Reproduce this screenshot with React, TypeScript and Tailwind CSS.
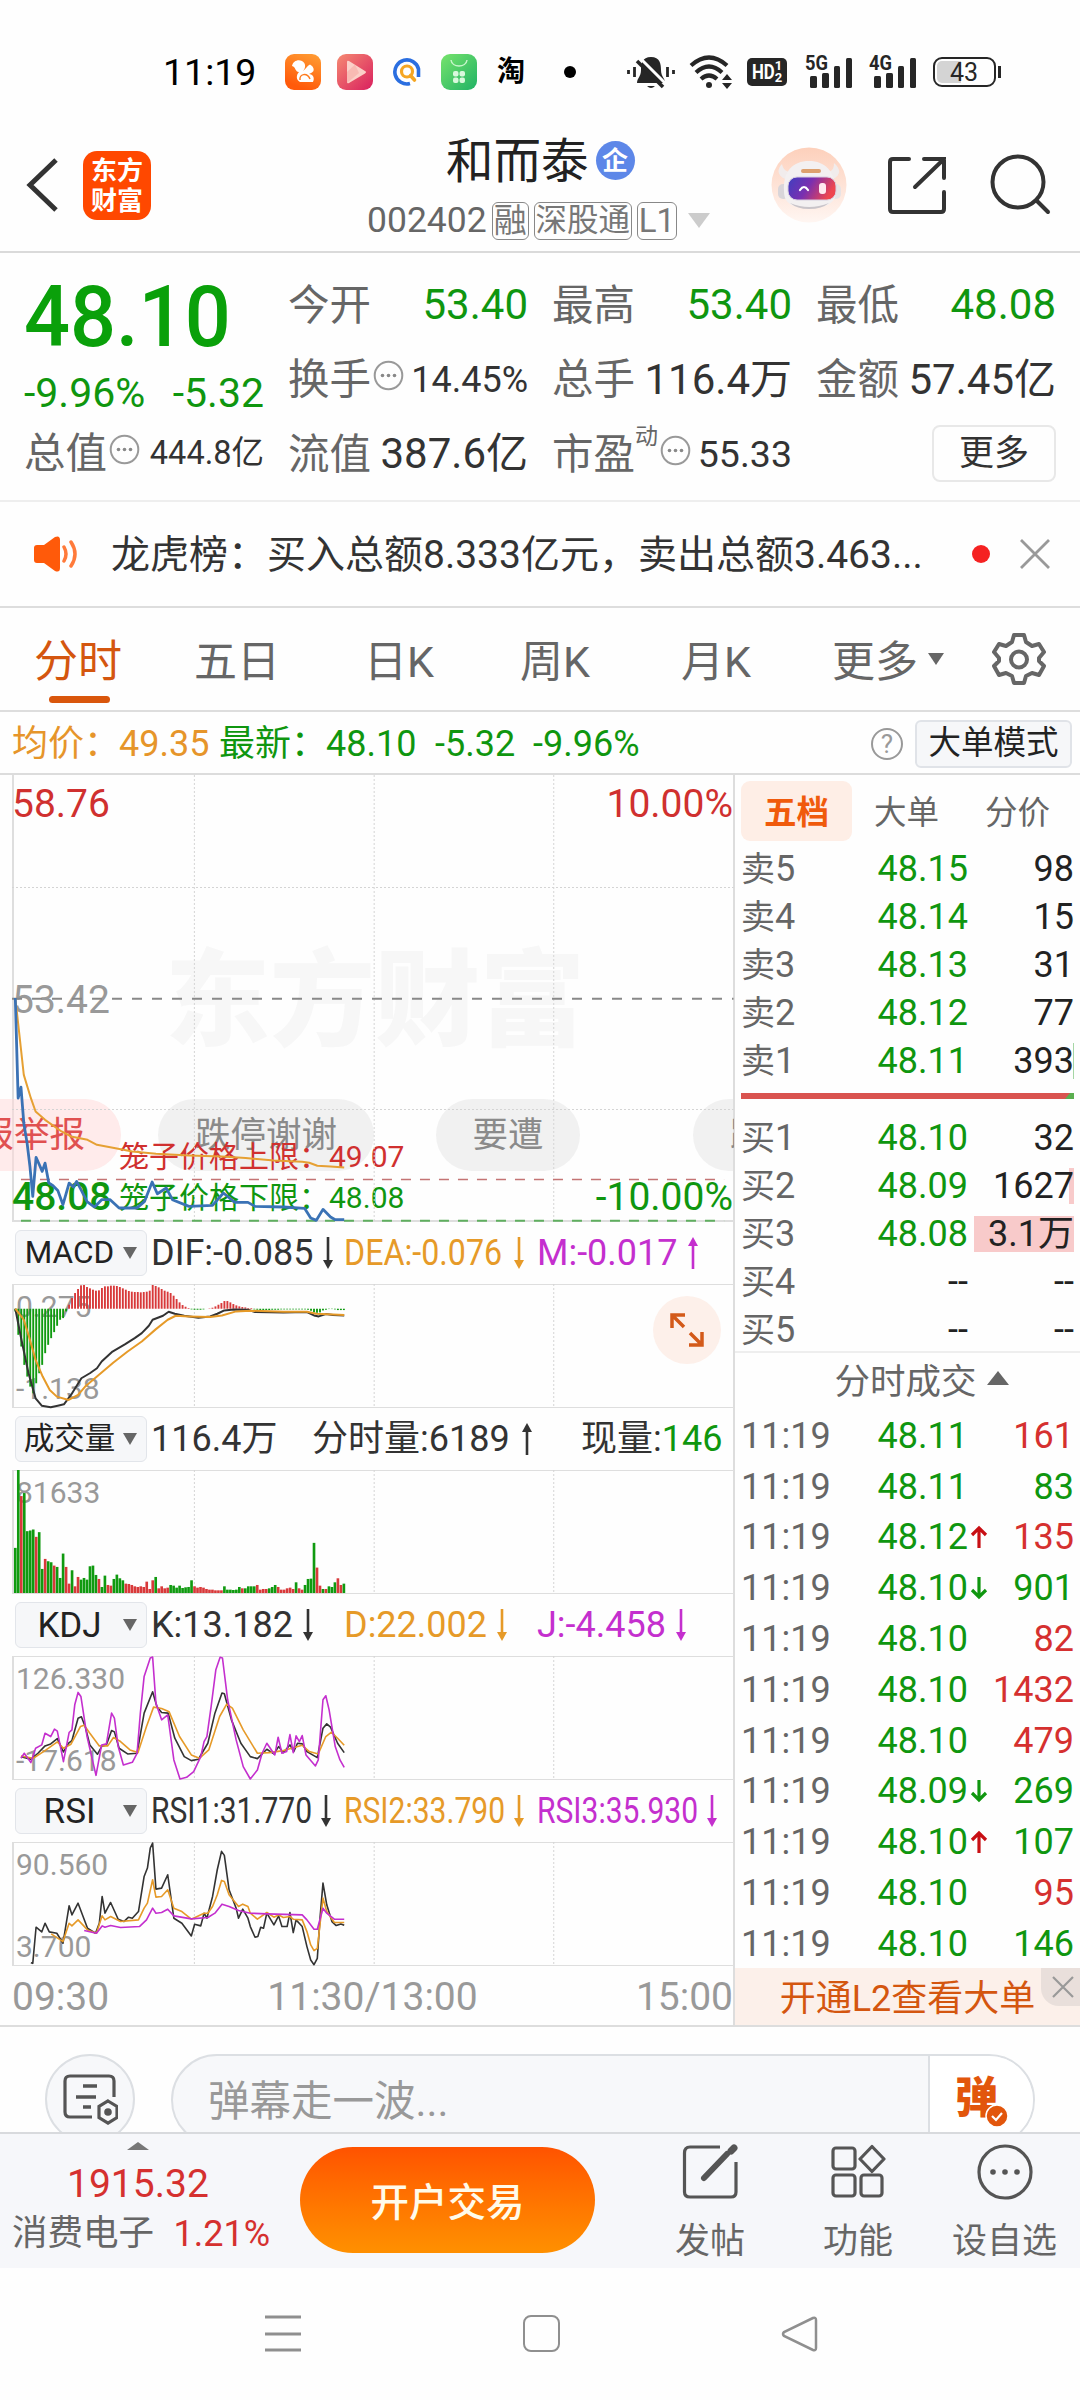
import type { ReactNode } from 'react';

const GREEN = '#0f960f';
const RED = '#d5302f';
const ORANGE = '#e69a28';
const PURPLE = '#c42fce';
const DARK = '#333333';

const asks = [
  { name: '卖5', price: '48.15', vol: '98' },
  { name: '卖4', price: '48.14', vol: '15' },
  { name: '卖3', price: '48.13', vol: '31' },
  { name: '卖2', price: '48.12', vol: '77' },
  { name: '卖1', price: '48.11', vol: '393', bar: 1 },
];

const bids = [
  { name: '买1', price: '48.10', vol: '32' },
  { name: '买2', price: '48.09', vol: '1627', bar: 5 },
  { name: '买3', price: '48.08', vol: '3.1万', bar: 100 },
  { name: '买4', price: '--', vol: '--' },
  { name: '买5', price: '--', vol: '--' },
];

const trades = [
  { price: '48.11', vol: '161', up: true },
  { price: '48.11', vol: '83', up: false },
  { price: '48.12', vol: '135', up: true, dir: 'up' },
  { price: '48.10', vol: '901', up: false, dir: 'down' },
  { price: '48.10', vol: '82', up: true },
  { price: '48.10', vol: '1432', up: true },
  { price: '48.10', vol: '479', up: true },
  { price: '48.09', vol: '269', up: false, dir: 'down' },
  { price: '48.10', vol: '107', up: false, dir: 'up' },
  { price: '48.10', vol: '95', up: true },
  { price: '48.10', vol: '146', up: false },
];

// Series, in plot units (1530 wide)
const priceLine = '32,684 38,985 44,952 50,1060 57,1120 63,1190 69,1280 76,1163 83,1185 89,1205 95,1180 103,1240 112,1248 122,1262 133,1305 146,1240 155,1252 162,1235 172,1262 184,1296 200,1312 215,1290 233,1290 252,1315 290,1315 306,1295 322,1237 333,1272 352,1255 365,1290 400,1310 450,1307 473,1270 497,1298 525,1298 540,1310 600,1312 645,1316 658,1345 670,1352 684,1319 700,1342 710,1350 729,1350';
const avgLine = '32,684 38,760 50,915 65,985 75,1025 95,1050 130,1085 150,1100 185,1110 205,1125 250,1137 280,1145 330,1152 400,1157 470,1160 520,1165 580,1172 640,1176 655,1179 672,1188 700,1190 729,1193';
const difLine = '32,297 45,390 60,490 75,565 88,587 107,592 122,587 135,583 150,555 172,505 190,490 205,475 215,455 238,425 265,403 285,385 300,370 315,348 323,330 345,318 357,306 370,312 390,318 420,324 445,320 460,312 475,302 495,299 525,300 540,307 600,308 650,307 665,317 675,320 690,313 705,316 729,317';
const deaLine = '32,297 50,330 62,385 75,450 90,500 105,540 120,560 145,570 165,555 180,530 205,500 240,458 270,425 300,395 330,358 355,330 372,318 400,320 445,322 470,317 500,305 530,303 600,306 650,306 670,312 729,316';
const kLine = '44,500 65,508 80,490 95,468 107,462 121,446 134,486 145,460 152,452 165,385 172,381 180,410 190,465 206,493 215,470 225,465 236,422 242,426 252,475 270,492 290,490 305,370 323,306 332,350 342,368 356,370 370,445 390,500 405,512 420,508 440,460 455,370 470,310 475,312 490,390 510,460 530,500 545,506 565,478 580,492 590,470 600,488 614,465 622,485 630,460 640,462 650,485 672,503 684,415 692,402 700,412 715,460 729,488';
const dLine = '44,498 70,505 95,482 121,456 134,475 150,463 170,410 178,406 190,430 210,468 228,468 240,443 255,455 275,480 292,488 310,410 325,352 342,356 358,366 380,440 405,495 422,505 442,480 465,380 480,343 492,355 515,420 545,490 570,488 600,482 625,472 640,466 655,485 674,492 690,440 702,427 715,445 729,466';
const jLine = '44,505 51,490 65,518 75,475 88,465 95,430 107,440 115,418 121,424 134,515 146,428 152,420 158,345 165,308 171,320 184,440 203,556 215,465 225,462 236,370 242,385 250,470 261,525 280,517 290,490 297,370 305,260 318,205 323,202 330,340 342,390 355,375 368,510 381,567 395,562 410,545 425,500 432,455 438,440 447,350 457,240 466,203 471,205 482,330 500,450 515,530 530,567 545,540 555,490 565,460 582,495 589,442 597,490 607,485 614,434 621,488 627,438 634,455 640,437 648,495 668,528 674,510 684,330 690,318 697,360 710,470 720,510 729,532';
const rsi1 = '65,1118 69,1120 76,1012 88,1026 95,1000 104,1026 120,1030 133,1060 146,948 152,975 165,940 185,1015 202,1030 210,1000 216,920 222,970 234,938 250,988 262,995 272,982 280,985 293,965 305,860 312,835 318,775 323,760 330,898 342,895 355,855 368,985 385,1000 405,1038 412,1003 425,1008 432,970 438,985 450,920 460,840 469,785 475,797 485,900 500,955 505,985 514,958 525,985 530,1010 540,1042 546,1040 552,1012 558,1015 565,970 580,1005 590,978 597,1010 608,1010 614,968 621,1028 627,990 640,1010 650,1070 658,1110 665,1124 672,1105 678,980 684,880 692,945 703,995 712,1007 722,1002 729,1006';
const rsi2 = '108,1032 133,1055 146,1000 152,1008 165,990 185,1020 204,1030 216,978 222,990 234,980 255,995 293,990 305,955 312,940 323,870 330,922 342,920 355,900 368,955 385,965 405,988 432,970 440,970 450,950 460,915 469,872 475,875 485,915 505,950 514,943 525,950 530,970 545,988 565,968 580,982 590,975 600,983 614,980 621,988 640,990 650,1025 658,1065 665,1082 672,1075 678,1000 684,925 692,965 708,998 729,998';
const rsi3 = '178,1022 204,1030 216,1008 222,1012 234,1007 255,1013 295,1010 310,990 323,955 330,970 342,968 355,958 368,978 405,987 440,983 455,970 470,943 485,950 505,962 530,970 565,972 640,975 650,990 665,1018 672,1018 684,955 692,970 708,988 729,988';

// positive = red, negative = green
const macdBars = [
  -8, -78, -113, -168, -203, -233, -253, -223, -193, -168, -133, -108, -88, -70, -51, -33, -28, -8,
  12, 32, 47, 59, 70, 71, 65, 61, 57, 54, 55, 62, 67, 67, 69, 69, 68, 65, 61, 57, 53, 51, 50, 50, 49, 50, 51, 54,
  71, 68, 64, 59, 54, 51, 47, 39, 29, 19, 11, 6, 2, -2, -3, -3, -3, -2, 0, 1, 3, 7, 12, 17, 23, 23, 19, 14, 10, 7, 5, 4, 2, 2,
  -2, -3, -4, -4, -4, -4, -3, -3, -3, -2, -2, -2, -2, -2, -2, -2, -2, -2, -3, -6, -11, -12, -11, -5, -3, -1, -1, -2, -4, -4, -4,
];
const volBars = [
  -135, -368, 290, -299, -185, -187, -190, 168, -182, -72, 102, -95, -92, 82, -78, -45, -118, 78, 28, -68, 20, 48, -40, -45, -40, -80, -82, -54, 42, -18,
  -52, 24, 22, -42, -55, -44, -38, 28, 27, 24, 20, 18, 20, 18, 34, 12, 38, -48, 14, 20, 14, 16, -24, -22, -16, -22, -15, -17, -18, -38,
  20, 16, 18, 16, 12, 10, 10, 8, 8, 8, -20, -10, -10, -9, -10, -18, 14, -14, -20, -20, -20, 24, 10, 12, 12, -14, -18, -24, 18, 10,
  10, 14, 16, 12, -32, 14, 10, -24, -42, -43, -150, 76, 22, -12, 12, -20, -18, -32, 44, 24, -28,
];

function Line({ points, color, width = 1.6 }: { points: string; color: string; width?: number }) {
  return <polyline points={points} fill="none" stroke={color} strokeWidth={width} strokeLinejoin="round" vectorEffect="non-scaling-stroke" />;
}

function Bars({ data, base, width, signed }: { data: number[]; base: number; width: number; signed?: boolean }) {
  return (
    <>
      {data.map((v, i) => (
        <rect key={i} x={32 + i * 6.33 - width / 2} width={width} y={signed && v < 0 ? base : base - Math.abs(v)} height={Math.abs(v)} fill={v > 0 ? '#d8393a' : '#109a10'} />
      ))}
    </>
  );
}

function Grid({ top, bottom }: { top: number; bottom: number }) {
  return (
    <g stroke="#d4d4d4" strokeDasharray="2 2">
      {[411.5, 792.5, 1173].map((x) => (
        <line key={x} x1={x} x2={x} y1={top} y2={bottom} vectorEffect="non-scaling-stroke" />
      ))}
    </g>
  );
}

function Panel({ top, children, labels }: { top: number; children: ReactNode; labels: ReactNode }) {
  return (
    <div className="relative ml-3 h-[124px] w-[722px] border-y-[1.5px] border-l-2 border-[#dedede] text-[30px] leading-none text-[#999]">
      {labels}
      <svg className="absolute -left-[2px] -top-px h-[123px] w-[722px] overflow-visible" viewBox={`25 ${top} 1530 368`} preserveAspectRatio="none">
        <Grid top={top} bottom={top + 368} />
        {children}
      </svg>
    </div>
  );
}

function ThinArrow({ up }: { up?: boolean }) {
  return (
    <svg className={up ? 'h-8 w-2.5 shrink-0' : 'h-8 w-2.5 shrink-0 rotate-180'} viewBox="0 0 10 32">
      <path d="M5 6V32" stroke="currentColor" strokeWidth="2.6" />
      <path d="M0 9L5 0L10 9Z" fill="currentColor" />
    </svg>
  );
}

function IndicatorRow({ name, size = 'text-[31.5px]', children }: { name: string; size?: string; children: ReactNode }) {
  return (
    <div className="flex h-[62px] items-center pl-[15px] text-[36px] leading-none">
      <div className={`flex h-[46px] w-[132px] shrink-0 items-center justify-between rounded-md border border-[#e2e5ea] bg-[#f6f7f9] pr-[9px] text-[#222] ${size}`}>
        <span className="flex-1 text-center text-nowrap">{name}</span>
        <span className="h-0 w-0 border-x-[7px] border-t-[12px] border-x-transparent border-t-[#666]" />
      </div>
      <div className="flex flex-1 items-center pl-1">{children}</div>
    </div>
  );
}

function Value({ text, color, up, squeeze }: { text: string; color: string; up?: boolean; squeeze?: boolean }) {
  return (
    <div className="flex w-[193px] shrink-0 items-center gap-2.5 whitespace-nowrap" style={{ color }}>
      {squeeze ? (
        <span className="w-[160px]">
          <span className={text.startsWith('DEA') ? 'inline-block origin-left scale-x-[0.895]' : 'inline-block origin-left scale-x-[0.835]'}>{text}</span>
        </span>
      ) : (
        <span>{text}</span>
      )}
      <ThinArrow up={up} />
    </div>
  );
}

function Dots() {
  return (
    <svg className="h-[31px] w-[31px] shrink-0" viewBox="0 0 31 31">
      <circle cx="15.5" cy="15.5" r="13.8" fill="none" stroke="#999" strokeWidth="2" />
      <g fill="#888"><circle cx="9.5" cy="15.5" r="1.8" /><circle cx="15.5" cy="15.5" r="1.8" /><circle cx="21.5" cy="15.5" r="1.8" /></g>
    </svg>
  );
}

function Stat({ label, value, size = 'text-[42px]', green, info, sup }: { label: string; value: string; size?: string; green?: boolean; info?: boolean; sup?: string }) {
  return (
    <div className="flex h-[74.5px] items-center whitespace-nowrap">
      <span className="text-[41.5px] text-[#666]">{label}</span>
      {sup && <span className="mb-9 text-[23px] text-[#666]">{sup}</span>}
      {info && <span className="mb-2 ml-0.5"><Dots /></span>}
      <span className={`ml-auto ${size} ${green ? 'text-[#0f960f]' : 'text-[#333]'}`}>{value}</span>
    </div>
  );
}

function Signal({ label }: { label: string }) {
  return (
    <svg className="h-8 w-[47px] overflow-visible" viewBox="0 0 47 32">
      <text x="-1" y="14" fontSize="21" fontWeight="700" fill="#262626" textLength="23" lengthAdjust="spacingAndGlyphs">{label}</text>
      <g fill="#262626">
        <rect x="4" y="20" width="7" height="12" rx="1.5" />
        <rect x="16" y="17" width="7" height="15" rx="1.5" />
        <rect x="28" y="10" width="6" height="22" rx="1.5" />
        <rect x="40" y="2" width="6" height="30" rx="1.5" />
      </g>
    </svg>
  );
}

function StatusBar() {
  return (
    <div className="flex h-[110px] items-center pt-[34px] leading-none text-black">
      <span className="ml-[163px] w-[122px] pt-px text-[37.5px]">11:19</span>
      <svg className="h-9 w-9" viewBox="0 0 36 36">
        <defs><linearGradient id="uc" x1="1" y1="0" x2="0.6" y2="1"><stop stopColor="#ff9f35" /><stop offset="1" stopColor="#ff5a0a" /></linearGradient></defs>
        <rect width="36" height="36" rx="9" fill="url(#uc)" />
        <path d="M7 12C8 7 13 5 17 7C21 9 21 14 18 17C21 15 22 12 25 10.500L27 12C29 14 29.500 17 27 18.500L24 20C28 20 30 24 28 28H15C11 26 11 21 14 18C10 18 11 13 7 12Z" fill="#fff" />
        <path d="M15 26C14 20 22 18 25 25" fill="none" stroke="#ff7a1c" strokeWidth="1.5" />
      </svg>
      <svg className="ml-4 h-9 w-9" viewBox="0 0 36 36">
        <defs><linearGradient id="vid" x1="0" y1="0" x2="1" y2="1"><stop stopColor="#f58a72" /><stop offset="1" stopColor="#d91f5e" /></linearGradient></defs>
        <rect width="36" height="36" rx="9" fill="url(#vid)" />
        <path d="M10 8Q10 6 12 7L28 17Q30 18 28 19.500L12 29Q10 30 10 28Z" fill="#fbd0c8" />
        <path d="M10 18L18 10.500L22 19L10 29Z" fill="#f7b1aa" opacity="0.7" />
      </svg>
      <svg className="ml-[20px] h-7 w-7" viewBox="0 0 28 28">
        <path d="M17 25.500A12 12 0 1 1 25.500 11V19" fill="none" stroke="#2a6ee0" strokeWidth="3.600" />
        <circle cx="14" cy="13.500" r="5.500" fill="none" stroke="#f5a623" strokeWidth="3.200" />
        <path d="M17.500 17.500L21.500 22" stroke="#f5a623" strokeWidth="3.600" strokeLinecap="round" />
      </svg>
      <svg className="ml-[20px] h-9 w-9" viewBox="0 0 36 36">
        <defs><linearGradient id="shop" x1="0" y1="0" x2="1" y2="1"><stop stopColor="#77e36c" /><stop offset="1" stopColor="#20b265" /></linearGradient></defs>
        <rect width="36" height="36" rx="9" fill="url(#shop)" />
        <path d="M10 6C11 14 25 14 26 6" fill="none" stroke="#c9f6cc" strokeWidth="1.500" />
        <g fill="#d9f8dc"><rect x="12" y="17" width="5.500" height="5.500" rx="2" /><rect x="18.500" y="17" width="5.500" height="5.500" rx="2" /><rect x="12" y="23.500" width="5.500" height="5.500" rx="2" /><rect x="18.500" y="23.500" width="5.500" height="5.500" rx="2" /></g>
      </svg>
      <span className="ml-5 text-[28px] font-bold">淘</span>
      <span className="ml-[39px] h-3 w-3 rounded-full bg-black" />
      <svg className="ml-[50px] h-9 w-[50px]" viewBox="0 0 50 36">
        <path d="M25 3C34 3 35 10 35 16C35 23 39 24 39 29H11C11 24 15 23 15 16C15 10 16 3 25 3Z" fill="#262626" />
        <path d="M21 32H29Q25 36 21 32Z" fill="#262626" />
        <path d="M14 4L41 31" stroke="#fff" strokeWidth="3" />
        <path d="M11 7L37 33" stroke="#262626" strokeWidth="3.600" />
        <path d="M2.500 16V20M8.500 13V23M41.500 13V23M47.500 16V20" stroke="#262626" strokeWidth="2.800" />
      </svg>
      <svg className="ml-[13px] h-9 w-11" viewBox="0 0 44 36">
        <g fill="none" stroke="#262626" strokeWidth="4.200">
          <path d="M2 11.500Q20 -4.500 38 11.500" />
          <path d="M7 18.500Q20 6.500 33 18.500" />
          <path d="M12 25Q20 18 28 25" />
        </g>
        <circle cx="20" cy="31" r="3" fill="#262626" />
        <path d="M33 26L38 20L43 26ZM33 29L38 35L43 29Z" fill="#262626" />
      </svg>
      <div className="ml-[14px] flex h-[28px] w-10 items-center justify-center rounded-[5px] bg-[#262626] text-white">
        <span className="inline-block w-[23px] text-[21px] font-bold"><span className="inline-block origin-left scale-x-[0.8]">HD</span></span>
        <span className="flex flex-col text-[13px] font-bold leading-[12px]"><span>1</span><span>2</span></span>
      </div>
      <span className="ml-[19px]"><Signal label="5G" /></span>
      <span className="ml-[17px]"><Signal label="4G" /></span>
      <div className="ml-[16px] flex items-center gap-0.5">
        <div className="flex h-[30px] w-[63px] items-center rounded-[9px] border-[2.5px] border-[#262626] p-[2px]">
          <div className="flex h-full w-[24px] items-center rounded-l-[5px] bg-[#d4d4d4] pl-[13px] text-[25px] text-[#262626]">43</div>
        </div>
        <div className="h-3 w-[2.5px] bg-[#262626]" />
      </div>
    </div>
  );
}

function Header() {
  return (
    <div className="flex h-[143px] items-start border-b-2 border-[#dadada] leading-none">
      <svg className="ml-[25px] mt-[46px] h-[58px] w-9" viewBox="0 0 36 58">
        <path d="M31 4L5 29L31 54" fill="none" stroke="#333" strokeWidth="5" />
      </svg>
      <div className="ml-[22px] mt-[41px] flex h-[69px] w-[68px] flex-col items-center justify-center rounded-[14px] bg-[#ff4800] text-[26px] font-bold leading-[30px] text-white">
        <span>东方</span>
        <span>财富</span>
      </div>
      <div className="ml-[216px] mt-[29px] flex w-[343px] flex-col">
        <div className="flex items-center pl-[79px]">
          <span className="text-[47.5px] text-[#222]">和而泰</span>
          <span className="mb-1 ml-[7px] flex h-[39px] w-[39px] items-center justify-center rounded-full bg-[#5d87e8] text-[26px] font-bold text-white">企</span>
        </div>
        <div className="mt-[15px] flex items-center gap-[5px] text-[33px] text-[#777]">
          <span className="text-[35.5px] text-[#666]">002402</span>
          <span className="flex h-[38px] items-center rounded-md border-[1.5px] border-[#888] px-px text-nowrap">融</span>
          <span className="flex h-[38px] w-[98px] items-center justify-center rounded-md border-[1.5px] border-[#888] text-nowrap text-[31.5px]">深股通</span>
          <span className="flex h-[38px] items-center rounded-md border-[1.5px] border-[#888] px-px">L1</span>
          <span className="ml-1.5 h-0 w-0 border-x-[11px] border-t-[15px] border-x-transparent border-t-[#ccc]" />
        </div>
      </div>
      <svg className="ml-[61px] mt-[37px] h-[76px] w-[76px]" viewBox="0 0 76 76">
        <defs>
          <linearGradient id="peach" x1="0" y1="0" x2="0" y2="1"><stop stopColor="#fdd0bb" /><stop offset="1" stopColor="#fff6f2" /></linearGradient>
          <linearGradient id="visor" x1="0" y1="0" x2="1" y2="0.3"><stop stopColor="#3f3fc0" /><stop offset="0.5" stopColor="#7a2fb0" /><stop offset="1" stopColor="#ee4550" /></linearGradient>
        </defs>
        <circle cx="38" cy="38" r="37.500" fill="url(#peach)" />
        <path d="M14 32C6 28 6 22 11 17C12 23 16 25 22 26ZM62 32C70 28 70 22 63 16C63 23 60 25 54 26Z" fill="#f1ecec" />
        <rect x="7" y="37" width="11" height="15" rx="5" fill="#d9d5d9" />
        <rect x="59" y="37" width="11" height="15" rx="5" fill="#e7e3e5" />
        <path d="M13 44C12 24 22 14 38 14C54 14 64 24 65 44C65 57 54 61 39 61C22 61 13 57 13 44Z" fill="#f3f0f1" />
        <path d="M19 56Q38 64 58 56Q51 62 38 62Q26 62 19 56Z" fill="#c9c4c9" />
        <rect x="17" y="30" width="48" height="23" rx="9" fill="url(#visor)" stroke="#d8cfe0" strokeWidth="1" />
        <path d="M29 43Q33 37 37 43" fill="none" stroke="#fff" strokeWidth="2.200" strokeLinecap="round" />
        <rect x="48" y="36" width="7" height="11" rx="3" fill="#ffe9f0" />
        <rect x="30" y="22" width="20" height="4" rx="2" fill="#dda06e" />
      </svg>
      <svg className="ml-[40px] mt-[45px] h-[60px] w-[60px]" viewBox="0 0 60 60" fill="none" stroke="#333" strokeWidth="4" strokeLinecap="round">
        <path d="M22 4H6Q3 4 3 7V54Q3 57 6 57H54Q57 57 57 54V37" />
        <path d="M37 4H57V23M57 4L28 32" />
      </svg>
      <svg className="ml-[43px] mt-[44px] h-[62px] w-[62px]" viewBox="0 0 62 62" fill="none" stroke="#333" strokeWidth="4">
        <circle cx="28" cy="28" r="25.500" />
        <path d="M47 47L58 58" strokeLinecap="round" />
      </svg>
    </div>
  );
}

function Quote() {
  return (
    <div className="flex h-[249px] border-b-2 border-[#eee] pt-[15px] leading-none">
      <div className="ml-[24px] w-[240px]">
        <div className="flex h-[98px] items-center text-[#0aa00a]">
          <span className="origin-left scale-x-[0.942] text-[86px] font-medium">48.10</span>
        </div>
        <div className="mt-[4px] flex h-[46px] items-center justify-between text-[41px] text-[#0f960f]">
          <span>-9.96%</span>
          <span>-5.32</span>
        </div>
        <Stat label="总值" value="444.8亿" size="text-[32.5px]" info />
      </div>
      <div className="ml-[24px] w-[240px]">
        <Stat label="今开" value="53.40" green />
        <Stat label="换手" value="14.45%" size="text-[36px]" info />
        <Stat label="流值" value="387.6亿" />
      </div>
      <div className="ml-[24px] w-[240px]">
        <Stat label="最高" value="53.40" green />
        <Stat label="总手" value="116.4万" />
        <Stat label="市盈" value="55.33" size="text-[37.5px]" sup="动" info />
      </div>
      <div className="ml-[24px] w-[240px]">
        <Stat label="最低" value="48.08" green />
        <Stat label="金额" value="57.45亿" />
        <div className="flex h-[72px] items-center justify-end">
          <span className="flex h-[57px] w-[124px] items-center justify-center rounded-lg border-2 border-[#e8e8e8] text-[35px] text-[#333]">更多</span>
        </div>
      </div>
    </div>
  );
}

function Notice() {
  return (
    <div className="flex h-[106px] items-center border-b-2 border-[#ddd] leading-none">
      <svg className="ml-[33px] h-9 w-[46px]" viewBox="0 0 46 36">
        <path d="M1 12Q1 9 4 9H11L22 1Q27 -1 27 4V32Q27 37 22 35L11 27H4Q1 27 1 24Z" fill="#ff5a0a" />
        <path d="M31 11Q35 18 31 25M38 6Q46 18 38 30" fill="none" stroke="#ff7a3a" strokeWidth="3.500" strokeLinecap="round" />
      </svg>
      <span className="mt-0.5 ml-[32px] w-[841px] whitespace-nowrap text-[39px] text-[#333]">龙虎榜：买入总额8.333亿元，卖出总额3.463...</span>
      <span className="ml-[20px] h-[18px] w-[18px] rounded-full bg-[#f52222]" />
      <svg className="ml-[29px] h-8 w-8" viewBox="0 0 32 32">
        <path d="M2 2L30 30M30 2L2 30" stroke="#999" strokeWidth="2.800" />
      </svg>
    </div>
  );
}

function Tabs() {
  return (
    <div className="flex h-[104px] items-center border-b-2 border-[#ddd] text-[43px] leading-none text-[#666]">
      <div className="relative ml-[34px] w-[160px] pt-1.5 text-[44px] text-[#d4560f]">
        分时
        <span className="absolute -bottom-[19px] left-[15px] h-[7px] w-[61px] rounded bg-[#d9560c]" />
      </div>
      <span className="w-[170px] pt-1.5">五日</span>
      <span className="w-[156px] pt-1.5">日K</span>
      <span className="w-[161px] pt-1.5">周K</span>
      <span className="w-[151px] pt-1.5">月K</span>
      <span className="pt-1.5">更多</span>
      <span className="ml-[10px] h-0 w-0 border-x-[8px] border-t-[12px] border-x-transparent border-t-[#666]" />
      <svg className="ml-[48px] h-[54px] w-[54px]" viewBox="0 0 54 54" fill="none" stroke="#666" strokeWidth="4" strokeLinejoin="round">
        <path d="M22 3H32L34 10L40 14L47 12L52 20L47 26V29L52 34L47 43L40 41L34 44L32 51H22L20 44L14 41L7 43L2 34L7 29V26L2 20L7 12L14 14L20 10Z" />
        <circle cx="27" cy="27.500" r="8" />
      </svg>
    </div>
  );
}

function InfoBar() {
  return (
    <div className="flex h-[63px] items-center border-b-2 border-[#dcdcdc] pt-0.5 text-[36px] leading-none whitespace-nowrap text-[#0f960f]">
      <span className="ml-[12px] w-[107px] text-[#e6952a]">均价：</span>
      <span className="w-[100px] text-[#e6952a]">49.35</span>
      <span className="w-[107px]">最新：</span>
      <span className="w-[109px]">48.10</span>
      <span className="w-[98px]">-5.32</span>
      <span>-9.96%</span>
      <span className="ml-auto flex h-8 w-8 items-center justify-center rounded-full border-2 border-[#999] text-[26px] text-[#999]">?</span>
      <span className="mr-2 ml-[12px] flex h-[48px] w-[157px] items-center justify-center rounded-md border-2 border-[#e0e3e8] bg-[#f6f7f9] text-[32.500px] text-[#222]">大单模式</span>
    </div>
  );
}

function PriceChart() {
  return (
    <div className="relative ml-3 h-[447px] w-[722px] border-b-2 border-l-2 border-[#dedede] text-[39px] leading-none whitespace-nowrap">
      <span className="absolute top-[174px] left-[151px] text-[105px] font-black text-[#f7f7f7]">东方财富</span>
      <span className="absolute top-[10px] -left-[2px] text-[#d0302f]">58.76</span>
      <span className="absolute top-[10px] right-px text-[#d0302f]">10.00%</span>
      <span className="absolute top-[206px] -left-[2px] text-[#999]">53.42</span>
      <span className="absolute top-[403px] -left-[2px] font-medium text-[#0f960f]">48.08</span>
      <span className="absolute top-[403px] right-px text-[#0f960f]">-10.00%</span>
      <div className="absolute top-[324px] -left-[14px] h-[74px] w-[734px] overflow-hidden text-[35.500px]">
        <span className="absolute top-0 -left-[60px] flex h-[72px] w-[181px] items-center justify-end rounded-full bg-[#ffd8d8]/50 pt-0.5 pr-[36px] text-[#e05050]">报举报</span>
        <span className="absolute top-0 left-[158px] flex h-[72px] w-[216px] items-center justify-center rounded-full bg-[#dedede]/40 pt-0.5 text-[#8a8a8a]">跌停谢谢</span>
        <span className="absolute top-0 left-[436px] flex h-[72px] w-[144px] items-center justify-center rounded-full bg-[#dedede]/40 pt-0.5 text-[#8a8a8a]">要遭</span>
        <span className="absolute top-0 left-[693px] flex h-[72px] w-[144px] items-center rounded-full bg-[#dedede]/40 pt-0.5 pl-[37px] text-[#8a8a8a]">跌</span>
      </div>
      <span className="absolute top-[367px] left-[105px] text-[30px] text-[#d0302f]">笼子价格上限：49.07</span>
      <span className="absolute top-[408px] left-[105px] text-[30px] text-[#0f960f]">笼子价格下限：48.08</span>
      <svg className="absolute top-0 -left-[2px] h-[446px] w-[722px] overflow-visible" viewBox="25 14 1530 1340" preserveAspectRatio="none">
        <Grid top={14} bottom={1353} />
        <g stroke="#d4d4d4" strokeDasharray="2 2">
          <line x1="25" x2="1554" y1="352" y2="352" vectorEffect="non-scaling-stroke" />
          <line x1="25" x2="1554" y1="1019" y2="1019" vectorEffect="non-scaling-stroke" />
        </g>
        <line x1="25" x2="1554" y1="686" y2="686" stroke="#888" strokeWidth="2" strokeDasharray="10 10" vectorEffect="non-scaling-stroke" />
        <line x1="44" x2="1534" y1="1229" y2="1229" stroke="#c47474" strokeWidth="1.500" strokeDasharray="10 9" vectorEffect="non-scaling-stroke" />
        <line x1="44" x2="1534" y1="1353" y2="1353" stroke="#5fae5f" strokeWidth="2" strokeDasharray="10 9" vectorEffect="non-scaling-stroke" />
        <Line points={avgLine} color="#e6a033" width={2} />
        <Line points={priceLine} color="#3a72b5" width={2.8} />
      </svg>
    </div>
  );
}

function Charts() {
  return (
    <div className="w-[735px] shrink-0 border-r-2 border-[#ddd]">
      <PriceChart />
      <IndicatorRow name="MACD">
        <Value text="DIF:-0.085" color={DARK} />
        <Value text="DEA:-0.076" color={ORANGE} squeeze />
        <Value text="M:-0.017" color={PURPLE} up />
      </IndicatorRow>
      <div className="relative">
        <Panel
          top={223}
          labels={<><span className="absolute top-[7px] left-0.5">0.275</span><span className="absolute top-[89px] left-0.5">-1.138</span></>}
        >
          <Bars data={macdBars} base={297} width={4} signed />
          <Line points={difLine} color={DARK} width={2} />
          <Line points={deaLine} color={ORANGE} width={2} />
        </Panel>
        <div className="absolute top-[12px] right-[12px] flex h-[68px] w-[68px] items-center justify-center rounded-full bg-[#fdf0ea]">
          <svg className="h-[34px] w-[34px]" viewBox="0 0 34 34" fill="none" stroke="#d35a1a" strokeWidth="3.500">
            <path d="M2 15V2H15M2 2L14 14M32 19V32H19M32 32L20 20" />
          </svg>
        </div>
      </div>
      <IndicatorRow name="成交量" size="text-[30.5px]">
        <span className="w-[161px] text-nowrap text-[#333]">116.4万</span>
        <div className="flex w-[269px] items-center gap-[12px] text-nowrap text-[#333]"><span>分时量:6189</span><ThinArrow up /></div>
        <span className="text-nowrap text-[#333]">现量:<span className="text-[#0f960f]">146</span></span>
      </IndicatorRow>
      <Panel top={781} labels={<span className="absolute top-[7px] left-0.5">81633</span>}>
        <Bars data={volBars} base={1149} width={5.6} />
      </Panel>
      <IndicatorRow name="KDJ" size="text-[35px]">
        <Value text="K:13.182" color={DARK} />
        <Value text="D:22.002" color={ORANGE} />
        <Value text="J:-4.458" color={PURPLE} />
      </IndicatorRow>
      <Panel
        top={199}
        labels={<><span className="absolute top-[7px] left-0.5">126.330</span><span className="absolute top-[89px] left-0.5">-17.618</span></>}
      >
        <Line points={kLine} color={DARK} />
        <Line points={dLine} color={ORANGE} />
        <Line points={jLine} color={PURPLE} />
      </Panel>
      <IndicatorRow name="RSI" size="text-[35px]">
        <Value text="RSI1:31.770" color={DARK} squeeze />
        <Value text="RSI2:33.790" color={ORANGE} squeeze />
        <Value text="RSI3:35.930" color={PURPLE} squeeze />
      </IndicatorRow>
      <Panel
        top={757}
        labels={<><span className="absolute top-[7px] left-0.5">90.560</span><span className="absolute top-[89px] left-0.5">3.700</span></>}
      >
        <Line points={rsi1} color={DARK} />
        <Line points={rsi2} color={ORANGE} />
        <Line points={rsi3} color={PURPLE} />
      </Panel>
      <div className="flex h-[59px] items-center justify-between pt-1 pl-[12px] text-[39px] leading-none text-[#999]">
        <span>09:30</span>
        <span>11:30/13:00</span>
        <span>15:00</span>
      </div>
    </div>
  );
}

function Level({ name, price, vol, bar = 0, ask }: { name: string; price: string; vol: string; bar?: number; ask?: boolean }) {
  const empty = price === '--';
  return (
    <div className="flex h-12 items-center text-[36px]">
      <span className="w-[101px] text-nowrap text-[#666]"><span className="text-[34px]">{name[0]}</span>{name[1]}</span>
      <span className={empty ? 'w-[126px] text-right text-[#222]' : 'w-[126px] text-right text-[#0f960f]'}>{price}</span>
      <span className="relative flex h-9 flex-1 items-center justify-end text-[#222]">
        <span className={`absolute inset-y-0 right-0 ${ask ? 'bg-[#a5d6a5]' : 'bg-[#f8caca]'}`} style={{ width: bar }} />
        <span className="relative">{vol}</span>
      </span>
    </div>
  );
}

function OrderBook() {
  return (
    <div className="flex flex-1 flex-col leading-none">
      <div className="mt-[6px] ml-1.5 flex h-[60px] shrink-0 items-center text-[32.500px] text-[#666]">
        <span className="flex h-[60px] w-[111px] items-center justify-center rounded-[9px] bg-[#feeee6] pt-1 font-bold text-[#f05a0c]">五档</span>
        <span className="ml-[22px] w-[111px] pt-1">大单</span>
        <span className="pt-1">分价</span>
      </div>
      <div className="mt-1 shrink-0 pr-[6px] pl-[6px]">
        {asks.map((l) => <Level key={l.name} {...l} ask />)}
      </div>
      <div className="mt-[8px] mr-1.5 ml-1.5 flex h-1.5 shrink-0 bg-[#d9534f]">
        <span className="ml-auto h-0 w-0 border-b-[6px] border-l-[5px] border-b-[#5aae4f] border-l-transparent" />
        <span className="w-1 bg-[#5aae4f]" />
      </div>
      <div className="mt-[15px] shrink-0 pr-[6px] pl-[6px]">
        {bids.map((l) => <Level key={l.name} {...l} />)}
      </div>
      <div className="mt-[-3px] flex h-[58px] shrink-0 items-center justify-center gap-2.5 border-t-2 border-[#eee] pt-1 pl-7 text-[35.500px] text-[#666]">
        分时成交
        <span className="mb-2.5 h-0 w-0 border-x-[11px] border-b-[14px] border-x-transparent border-b-[#666]" />
      </div>
      {trades.map((t, i) => (
        <div key={i} className="flex h-[50.800px] shrink-0 items-center pt-[3px] pr-[6px] pl-[6px] text-[36px]">
          <span className="w-[101px] text-[#666]">11:19</span>
          <span className="w-[126px] text-right text-[#0f960f]">{t.price}</span>
          <span className="w-5 pl-0.5">
            {t.dir && (
              <svg className={t.dir === 'up' ? 'h-6 w-[18px]' : 'h-6 w-[18px] rotate-180'} viewBox="0 0 18 24" fill="none" stroke={t.dir === 'up' ? '#c80f14' : GREEN} strokeWidth="3.200">
                <path d="M9 23V3M2 10L9 3L16 10" />
              </svg>
            )}
          </span>
          <span className="flex-1 text-right" style={{ color: t.up ? RED : GREEN }}>{t.vol}</span>
        </div>
      ))}
      <div className="relative flex min-h-0 flex-1 items-center justify-center bg-[#fcf0ea] pt-1.5 text-[36px] text-[#d4560f]">
        开通L2查看大单
        <span className="absolute top-0 right-0 flex h-[38px] w-[39px] items-center justify-center rounded-bl-[18px] bg-[#e9dfdb]">
          <svg className="ml-1 h-[22px] w-[22px]" viewBox="0 0 22 22"><path d="M1 1L21 21M21 1L1 21" stroke="#999" strokeWidth="2.200" /></svg>
        </span>
      </div>
    </div>
  );
}

function Danmaku() {
  return (
    <div className="flex h-[107px] items-start overflow-hidden border-t-2 border-[#ddd] pt-[27px] leading-none">
      <div className="ml-[45px] flex h-[90px] w-[90px] shrink-0 items-center justify-center rounded-full border-2 border-[#dcdfe3] bg-[#f7f8fa]">
        <svg className="h-[54px] w-[56px]" viewBox="0 0 56 54" fill="none" stroke="#555" strokeWidth="3.200">
          <path d="M52 25V9Q52 4 47 4H8Q3 4 3 9V40Q3 45 8 45H30" />
          <path d="M21 14H35M14 25H34M21 35H29" strokeWidth="3.600" />
          <path d="M46 29L55 34.500V45.500L46 51L37 45.500V34.500Z" />
          <circle cx="46" cy="40" r="2.200" fill="#555" />
        </svg>
      </div>
      <div className="ml-9 flex h-[92px] w-[864px] shrink-0 overflow-hidden rounded-full border-2 border-[#dcdfe3] bg-[#f7f8fa]">
        <span className="flex w-[755px] items-center pt-1 pl-[35px] text-[41.500px] text-[#999]">弹幕走一波...</span>
        <div className="relative flex-1 border-l-2 border-[#dcdfe3] bg-white">
          <span className="absolute top-[21px] left-[25px] text-[43px] font-black text-[#e2560c]">弹</span>
          <svg className="absolute top-[48px] left-[55px] h-6 w-6" viewBox="0 0 24 24">
            <circle cx="12" cy="12" r="11" fill="#e2560c" stroke="#fff" strokeWidth="1.500" />
            <path d="M7 12L11 16L17 9" fill="none" stroke="#fff" strokeWidth="2.200" />
          </svg>
        </div>
      </div>
    </div>
  );
}

function Action({ label, children }: { label: string; children: ReactNode }) {
  return (
    <div className="flex flex-col items-center text-[35px] text-[#666]">
      <svg className="h-14 w-14" viewBox="0 0 56 56" fill="none" stroke="#555" strokeWidth="3.200">{children}</svg>
      <span className="mt-[24px] text-nowrap">{label}</span>
    </div>
  );
}

function BottomBar() {
  return (
    <div className="flex h-[136px] items-start border-t-2 border-[#d8dadd] bg-[#f6f7fa] leading-none">
      <div className="ml-[12px] flex w-[258px] flex-col">
        <span className="mt-2 ml-[115px] h-0 w-0 border-x-[11px] border-b-[8px] border-x-transparent border-b-[#777]" />
        <span className="mt-[15px] ml-[55px] text-[39px] text-[#d5302f]">1915.32</span>
        <span className="mt-[12px] flex items-center justify-between text-[35.500px] text-nowrap text-[#666]">
          消费电子<span className="text-[36px] text-[#d5302f]">1.21%</span>
        </span>
      </div>
      <div className="mt-[13px] ml-[30px] flex h-[106px] w-[295px] items-center justify-center rounded-full bg-linear-to-b from-[#ff5200] to-[#ff9000] pt-1.5 text-[38.500px] font-medium text-[#fffbea]">开户交易</div>
      <div className="mt-[10px] ml-[80px]">
        <Action label="发帖">
          <path d="M38 3H8Q2.500 3 2.500 9V48Q2.500 53 8 53H49Q54 53 54 48V18" />
          <path d="M22 34L45 10" strokeWidth="6" strokeLinecap="round" />
          <path d="M49 7L52 4" strokeWidth="7" strokeLinecap="round" />
        </Action>
      </div>
      <div className="mt-[10px] ml-[78px]">
        <Action label="功能">
          <rect x="3" y="4" width="22" height="21" rx="3" />
          <rect x="3" y="31" width="22" height="21" rx="3" />
          <rect x="31" y="31" width="21" height="21" rx="3" />
          <path d="M42 2.500L54 15L42 27.500L30 15Z" strokeLinejoin="round" />
        </Action>
      </div>
      <div className="mt-[10px] ml-[59px]">
        <Action label="设自选">
          <circle cx="28" cy="28" r="26" />
          <g fill="#555" stroke="none"><circle cx="16" cy="28" r="2.800" /><circle cx="28" cy="28" r="2.800" /><circle cx="40" cy="28" r="2.800" /></g>
        </Action>
      </div>
    </div>
  );
}

export default function App() {
  return (
    <div className="flex h-[2400px] w-[1080px] flex-col overflow-hidden bg-[#fefefe] font-[Roboto,'Noto_Sans_CJK_SC',sans-serif]">
      <StatusBar />
      <Header />
      <Quote />
      <Notice />
      <Tabs />
      <InfoBar />
      <div className="flex h-[1250px]">
        <Charts />
        <OrderBook />
      </div>
      <Danmaku />
      <BottomBar />
      <div className="flex h-[132px] items-start pt-[47px]">
        <svg className="ml-[265px] h-[38px] w-9" viewBox="0 0 36 38" stroke="#8f8f8f" strokeWidth="3">
          <path d="M0 2H36M0 19H36M0 35H36" />
        </svg>
        <span className="ml-[222px] h-[37px] w-[37px] rounded-[8px] border-[2.5px] border-[#8f8f8f]" />
        <svg className="ml-[221px] h-[38px] w-[37px]" viewBox="0 0 37 38">
          <path d="M32 3L3 17Q1 19 3 21L32 35Q35 36 35 33V5Q35 2 32 3Z" fill="none" stroke="#8f8f8f" strokeWidth="2.500" />
        </svg>
      </div>
    </div>
  );
}
